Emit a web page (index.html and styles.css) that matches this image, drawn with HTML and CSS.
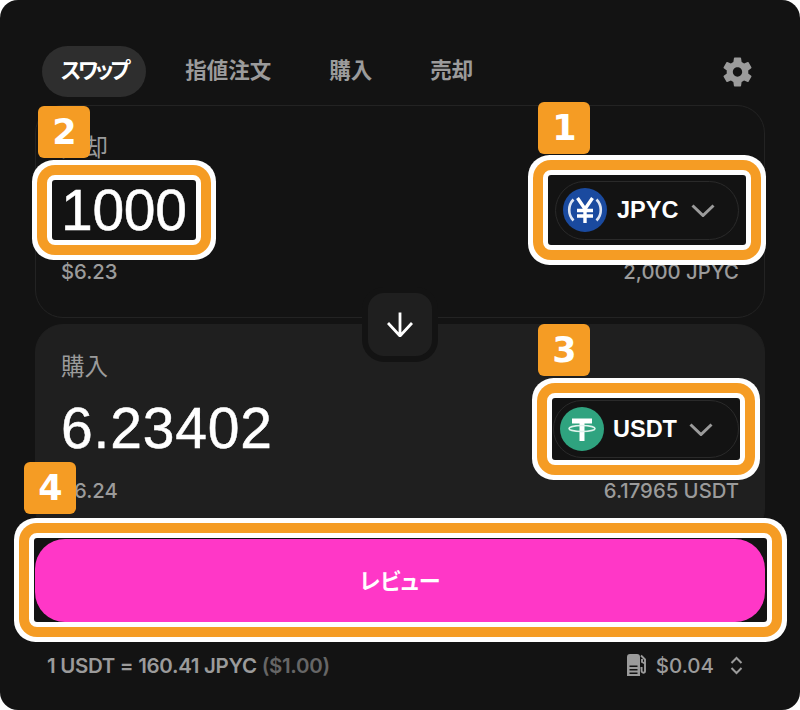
FILE: index.html
```html
<!DOCTYPE html>
<html lang="ja">
<head>
  <meta charset="UTF-8">
  <title>スワップ</title>
  <link rel="stylesheet" href="styles.css">
</head>
<body>
  <main class="panel">
    <nav class="tabs">
      <a class="tab active">スワップ</a>
      <a class="tab">指値注文</a>
      <a class="tab">購入</a>
      <a class="tab">売却</a>
      <svg class="gear" viewBox="2.5 2 19 20" fill="#9b9b9b"><path fill-rule="evenodd" d="M19.14 12.94c.04-.3.06-.61.06-.94 0-.32-.02-.64-.07-.94l2.03-1.58c.18-.14.23-.41.12-.61l-1.92-3.32c-.12-.22-.37-.29-.59-.22l-2.39.96c-.5-.38-1.03-.7-1.62-.94l-.36-2.54c-.04-.24-.24-.41-.48-.41h-3.84c-.24 0-.43.17-.47.41l-.36 2.54c-.59.24-1.13.57-1.62.94l-2.39-.96c-.22-.08-.47 0-.59.22L2.74 8.87c-.12.21-.08.47.12.61l2.03 1.58c-.05.3-.09.63-.09.94s.02.64.07.94l-2.03 1.58c-.18.14-.23.41-.12.61l1.92 3.32c.12.22.37.29.59.22l2.39-.96c.5.38 1.03.7 1.62.94l.36 2.54c.05.24.24.41.48.41h3.84c.24 0 .44-.17.47-.41l.36-2.54c.59-.24 1.13-.56 1.62-.94l2.39.96c.22.08.47 0 .59-.22l1.92-3.32c.12-.22.07-.47-.12-.61l-2.01-1.58zM12 15.1c-1.71 0-3.1-1.39-3.1-3.1s1.39-3.1 3.1-3.1 3.1 1.39 3.1 3.1-1.39 3.1-3.1 3.1z"/></svg>
    </nav>

    <div class="cards">
      <section class="card sell">
        <div class="card-label">売却</div>
        <div class="card-row">
          <div class="mark mark-amount"><span class="amount">1000</span></div>
          <div class="mark mark-sell">
            <button class="token">
              <svg class="token-icon" viewBox="0 0 44 44">
                <circle cx="22" cy="22" r="22" fill="#1a4a9f"/>
                <path d="M10.500 11.500a15 15 0 0 0 0 21M33.500 11.500a15 15 0 0 1 0 21" fill="none" stroke="#dfe6f3" stroke-width="2.600"/>
                <path d="M14.500 10 22 21l7.500-11M22 21v14M14 22.500h16M14 28h16" fill="none" stroke="#fff" stroke-width="3.400"/>
              </svg>
              <span class="symbol">JPYC</span>
              <svg class="chevron" viewBox="0 0 24 13"><path d="M1.500 1.500 12 11.500 22.500 1.500" fill="none" stroke="#9b9b9b" stroke-width="3"/></svg>
            </button>
          </div>
        </div>
        <div class="card-foot"><span>$6.23</span><span>2,000 JPYC</span></div>
      </section>

      <button class="flip">
        <svg viewBox="0 0 26 25" width="26" height="25"><path d="M13 .5v23.500M1 11l12 13 12-13" fill="none" stroke="#fff" stroke-width="2.800"/></svg>
      </button>

      <section class="card buy">
        <div class="card-label">購入</div>
        <div class="card-row">
          <span class="amount">6.23402</span>
          <div class="mark mark-buy">
            <button class="token token-usdt">
              <svg class="token-icon" viewBox="0 0 44 44">
                <circle cx="22" cy="22" r="22" fill="#2fa37f"/>
                <path d="M12 11.500h20v5h-7.500V34h-5V16.500H12z" fill="#fff"/>
                <ellipse cx="22" cy="21.500" rx="13" ry="3" fill="none" stroke="#dff3ec" stroke-width="1.600"/>
              </svg>
              <span class="symbol">USDT</span>
              <svg class="chevron" viewBox="0 0 24 13"><path d="M1.500 1.500 12 11.500 22.500 1.500" fill="none" stroke="#9b9b9b" stroke-width="3"/></svg>
            </button>
          </div>
        </div>
        <div class="card-foot"><span>$6.24</span><span>6.17965 USDT</span></div>
      </section>
    </div>

    <div class="mark mark-review">
      <button class="review">レビュー</button>
    </div>

    <footer class="rate">
      <div>1 USDT = 160.41 JPYC <span class="rate-usd">($1.00)</span></div>
      <div class="gas">
        <svg class="gas-icon" viewBox="0 0 20 22">
          <path fill-rule="evenodd" fill="#9b9b9b" d="M3 0h7a3 3 0 0 1 3 3v19H0V3a3 3 0 0 1 3-3zM2.500 11.500v1.500h8v-1.500zM2.500 15v1.500h8V15zM2.500 18.500V20h8v-1.500z"/>
          <path d="M14 1.500 18 5.500V17a1.700 1.700 0 0 1-3.400 0v-3H13.500M15 5v3l3 1.500" fill="none" stroke="#9b9b9b" stroke-width="1.900"/>
        </svg>
        <span>$0.04</span>
        <svg class="updown" viewBox="0 0 13 19"><path d="M1.500 7 6.500 2l5 5M1.500 12l5 5 5-5" fill="none" stroke="#9b9b9b" stroke-width="2"/></svg>
      </div>
    </footer>

    <span class="badge badge-1">1</span>
    <span class="badge badge-2">2</span>
    <span class="badge badge-3">3</span>
    <span class="badge badge-4">4</span>
  </main>
</body>
</html>
```

FILE: styles.css
```css
* {
  box-sizing: border-box;
}

body {
  margin: 0;
  background-color: #fff;
  font-family: Inter, "Noto Sans CJK JP", sans-serif;
  color: #9b9b9b;
}

button {
  font: inherit;
  border: none;
  padding: 0;
}

.panel {
  position: relative;
  width: 800px;
  height: 710px;
  padding: 46px 35px 0;
  background-color: #131313;
  border-radius: 18px;
  overflow: hidden;
}

/* tabs */
.tabs {
  display: flex;
  align-items: center;
  gap: 20px;
  height: 51px;
  margin-left: 7px;
  margin-bottom: 8px;
}

.tab {
  display: flex;
  align-items: center;
  height: 51px;
  padding: 0 19px 7px;
  border-radius: 26px;
  font-family: "Noto Sans CJK JP", sans-serif;
  font-size: 21.500px;
  font-weight: 700;
  font-feature-settings: "palt";
}

.tab.active {
  background-color: #2e2e2e;
  color: #fff;
  letter-spacing: -3px;
}

.gear {
  width: 29px;
  height: 30px;
  margin-left: auto;
  margin-right: 13px;
}

/* cards */
.cards {
  position: relative;
  display: flex;
  flex-direction: column;
  gap: 6px;
}

.card {
  height: 213px;
  padding: 23px 25px 0;
  border: 1px solid #232323;
  border-radius: 28px;
}

.card.buy {
  background-color: #1f1f1f;
  border-color: #1f1f1f;
}

.card-label {
  height: 34px;
  line-height: 34px;
  font-family: "Noto Sans CJK JP", sans-serif;
  font-size: 23.500px;
}

.card-row {
  display: flex;
  align-items: center;
  justify-content: space-between;
  height: 70px;
  margin-top: 12px;
}

.card-foot {
  display: flex;
  justify-content: space-between;
  margin-top: 12px;
  line-height: 30px;
  font-size: 20.300px;
  font-weight: 500;
}

.amount {
  padding-bottom: 3px;
  font-family: "Liberation Sans", sans-serif;
  font-size: 57px;
  letter-spacing: 0.8px;
  -webkit-text-stroke: 0.5px #fff;
  color: #fff;
}

/* orange highlight frames */
.mark {
  position: relative;
  z-index: 2;
  display: flex;
  align-items: center;
  background-color: #131313;
  border: 5px solid #fff;
  border-radius: 8px;
  box-shadow: 0 0 0 10px #f59c24, 0 0 0 15px #fff;
  box-sizing: content-box;
}

.mark-amount {
  width: 144px;
  height: 60px;
  margin-left: -14px;
}

.mark-amount .amount {
  margin-left: 9px;
  padding-bottom: 1px;
  letter-spacing: -0.3px;
}

.mark-sell {
  width: 198px;
  height: 70px;
  margin-right: -12px;
  justify-content: center;
}

.mark-buy {
  width: 188px;
  height: 62px;
  margin-right: -6px;
  justify-content: center;
}

.mark-review {
  align-items: flex-start;
  width: 733px;
  height: 83px;
  margin: -4px 0 0 -6px;
  padding-top: 1px;
}

.token {
  display: flex;
  align-items: center;
  gap: 10px;
  width: 184px;
  height: 59px;
  padding-left: 7px;
  background-color: #131313;
  border: 1px solid #2a2a2a;
  border-radius: 30px;
  color: #fff;
}

.token-usdt {
  gap: 9px;
  width: 186px;
  height: 58px;
  padding-left: 6px;
}

.token-icon {
  width: 44px;
  height: 44px;
}

.symbol {
  font-family: "Liberation Sans", sans-serif;
  font-size: 23.500px;
  font-weight: 700;
}

.chevron {
  width: 24px;
  height: 13px;
  margin-left: 3px;
}

/* swap direction */
.flip {
  position: absolute;
  z-index: 1;
  top: 182px;
  left: 327px;
  display: flex;
  align-items: center;
  justify-content: center;
  width: 76px;
  height: 75px;
  background-color: #1f1f1f;
  border: 6px solid #131313;
  border-radius: 22px;
}

.review {
  width: 730px;
  height: 83px;
  margin-left: 1px;
  padding-bottom: 4px;
  background-color: #ff37c7;
  border-radius: 30px;
  color: #fff;
  font-family: "Noto Sans CJK JP", sans-serif;
  font-size: 22px;
  font-weight: 700;
  font-feature-settings: "palt";
}

/* footer */
.rate {
  display: flex;
  align-items: center;
  justify-content: space-between;
  height: 30px;
  margin-top: 23px;
  padding: 0 22px 0 12px;
  font-size: 20.500px;
  font-weight: 600;
  letter-spacing: -0.32px;
}

.rate-usd {
  color: #666;
}

.gas {
  display: flex;
  align-items: center;
  font-size: 20.500px;
  font-weight: 500;
  letter-spacing: 0;
}

.gas-icon {
  width: 20px;
  height: 22px;
  margin-right: 9px;
}

.updown {
  width: 13px;
  height: 19px;
  margin-left: 16px;
}

/* numbered badges */
.badge {
  position: absolute;
  z-index: 3;
  display: flex;
  align-items: center;
  justify-content: center;
  width: 52px;
  height: 52px;
  padding-left: 1px;
  background-color: #f59c24;
  border-radius: 6px;
  font-family: "DejaVu Sans", sans-serif;
  font-size: 35px;
  font-weight: 700;
  color: #fff;
}

.badge-1 { top: 102px; left: 538px; }
.badge-2 { top: 106px; left: 38px; }
.badge-3 { top: 324px; left: 538px; }
.badge-4 { top: 462px; left: 24px; }
```
